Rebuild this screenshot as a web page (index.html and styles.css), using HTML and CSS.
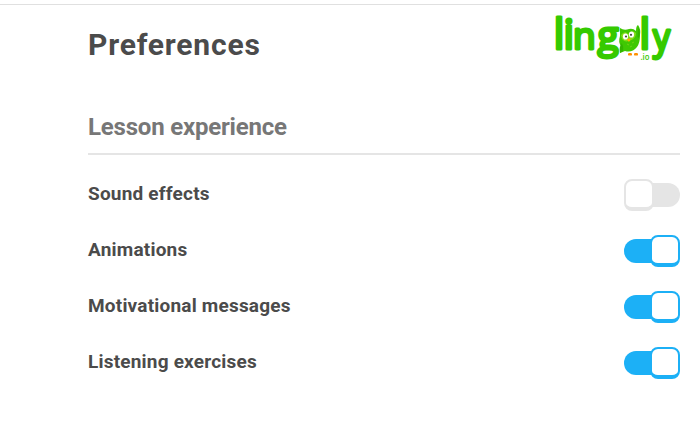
FILE: index.html
```
<!DOCTYPE html>
<html lang="en">
<head>
  <meta charset="UTF-8" />
  <title>Preferences</title>
  <link rel="stylesheet" href="styles.css">
</head>
<body>
<main class="page">
  <header class="header">
    <h1>Preferences</h1>
    <svg class="logo" width="124" height="54" viewBox="552 12 124 54" role="img" aria-label="lingoly.io">
      <g class="wordmark">
        <text x="553.7" y="48.5"><tspan class="tall">l</tspan><tspan class="tall" x="563.4">i</tspan><tspan x="573">n</tspan><tspan class="g" x="597.5" y="49.2">g</tspan></text>
        <text class="tall" x="639.5" y="48.5">l</text>
        <text x="653" y="49.5" textLength="17" lengthAdjust="spacingAndGlyphs">y</text>
      </g>
      <!-- owl -->
      <path fill="#3fc803" d="M620 28 Q624 31 629 29 Q633 28 636 31 Q636 26 638 25 Q641 29 640 35 Q640 43 637 47 Q632 53 625 51 L620 53 Q619 49 621 46 Q618 42 620 36 Z"/>
      <path fill="#82dc18" d="M621 35 Q625 30 628 34 Q632 29 636 33 Q636 39 629 41 Q622 43 621 35 Z"/>
      <path fill="#33b400" d="M621 43 Q624 45 623 51 L620 53 Q619 48 621 43 Z M638 27 Q641 31 639 38 L637.5 37 Z"/>
      <ellipse cx="625.5" cy="36.5" rx="2.6" ry="3.1" fill="#fff"/>
      <ellipse cx="631.5" cy="34.5" rx="2.6" ry="3.1" fill="#fff"/>
      <circle cx="626" cy="36.5" r="1.1" fill="#454b43"/>
      <circle cx="631" cy="34.8" r="1.1" fill="#454b43"/>
      <path fill="#ffb000" d="M626.5 39 L630.5 38.5 Q630.5 41.5 628.7 41.7 Z"/>
      <path stroke="#7ad31b" stroke-width=".8" fill="none" d="M627 44 l2 1 M632 43 l2-1 M630 47 l2-1"/>
      <rect x="628" y="53" width="4" height="2.6" rx="1.2" fill="#ff9000"/>
      <rect x="634" y="53" width="4" height="2.6" rx="1.2" fill="#ff9000"/>
      <text class="domain" x="640.5" y="60" textLength="9" lengthAdjust="spacingAndGlyphs">.io</text>
    </svg>
  </header>

  <section>
    <h2>Lesson experience</h2>
    <label class="row">
      <span>Sound effects</span>
      <input class="toggle" type="checkbox">
    </label>
    <label class="row">
      <span>Animations</span>
      <input class="toggle" type="checkbox" checked>
    </label>
    <label class="row">
      <span>Motivational messages</span>
      <input class="toggle" type="checkbox" checked>
    </label>
    <label class="row">
      <span>Listening exercises</span>
      <input class="toggle" type="checkbox" checked>
    </label>
  </section>
</main>
</body>
</html>
```
FILE: styles.css
```
*,
*::before {
  box-sizing: border-box;
}

body {
  margin: 0;
  padding-top: 4px;
  background: #fff;
  color: #4b4b4b;
  font-family: Roboto, sans-serif;
  overflow: hidden;
}

.page {
  height: 426px;
  padding: 0 20px 0 88px;
  border-top: 1px solid #e0e0e0;
}

.header {
  display: flex;
  justify-content: space-between;
  height: 103px;
  padding-top: 7px;
}

h1 {
  margin: 15px 0 0;
  font-size: 30px;
  line-height: 36px;
  letter-spacing: 0.8px;
}

.logo {
  margin-right: 4px;
  overflow: visible;
}

.wordmark {
  fill: #35ca00;
  stroke: #35ca00;
  stroke-width: 3px;
  stroke-linejoin: round;
  font: 400 37px "Open Sans", sans-serif;
}

.tall {
  font-size: 42px;
  stroke-width: 3.2px;
}

.g {
  font-size: 39px;
}

.domain {
  fill: #35ca00;
  font: 600 9.5px "Open Sans", sans-serif;
}

h2 {
  height: 47px;
  margin: 0 0 12px;
  padding-top: 4px;
  border-bottom: 2px solid #e5e5e5;
  color: #777;
  font-size: 24px;
  line-height: 30px;
  letter-spacing: -0.2px;
}

.row {
  display: flex;
  align-items: center;
  justify-content: space-between;
  height: 56px;
  font-size: 19px;
  font-weight: bold;
  line-height: 24px;
  letter-spacing: 0.2px;
}

.row span {
  margin-top: -3px;
}

.toggle {
  display: flex;
  align-items: center;
  width: 56px;
  height: 24px;
  margin: 0;
  border-radius: 12px;
  background: #e5e5e5;
  appearance: none;
}

.toggle::before {
  content: "";
  flex: none;
  width: 30px;
  height: 32px;
  border: 2px solid #e5e5e5;
  border-bottom-width: 4px;
  border-radius: 8px;
  background: #fff;
}

.toggle:checked {
  justify-content: flex-end;
  background: #1cb0f6;
}

.toggle:checked::before {
  border-color: #1cb0f6;
}
```
